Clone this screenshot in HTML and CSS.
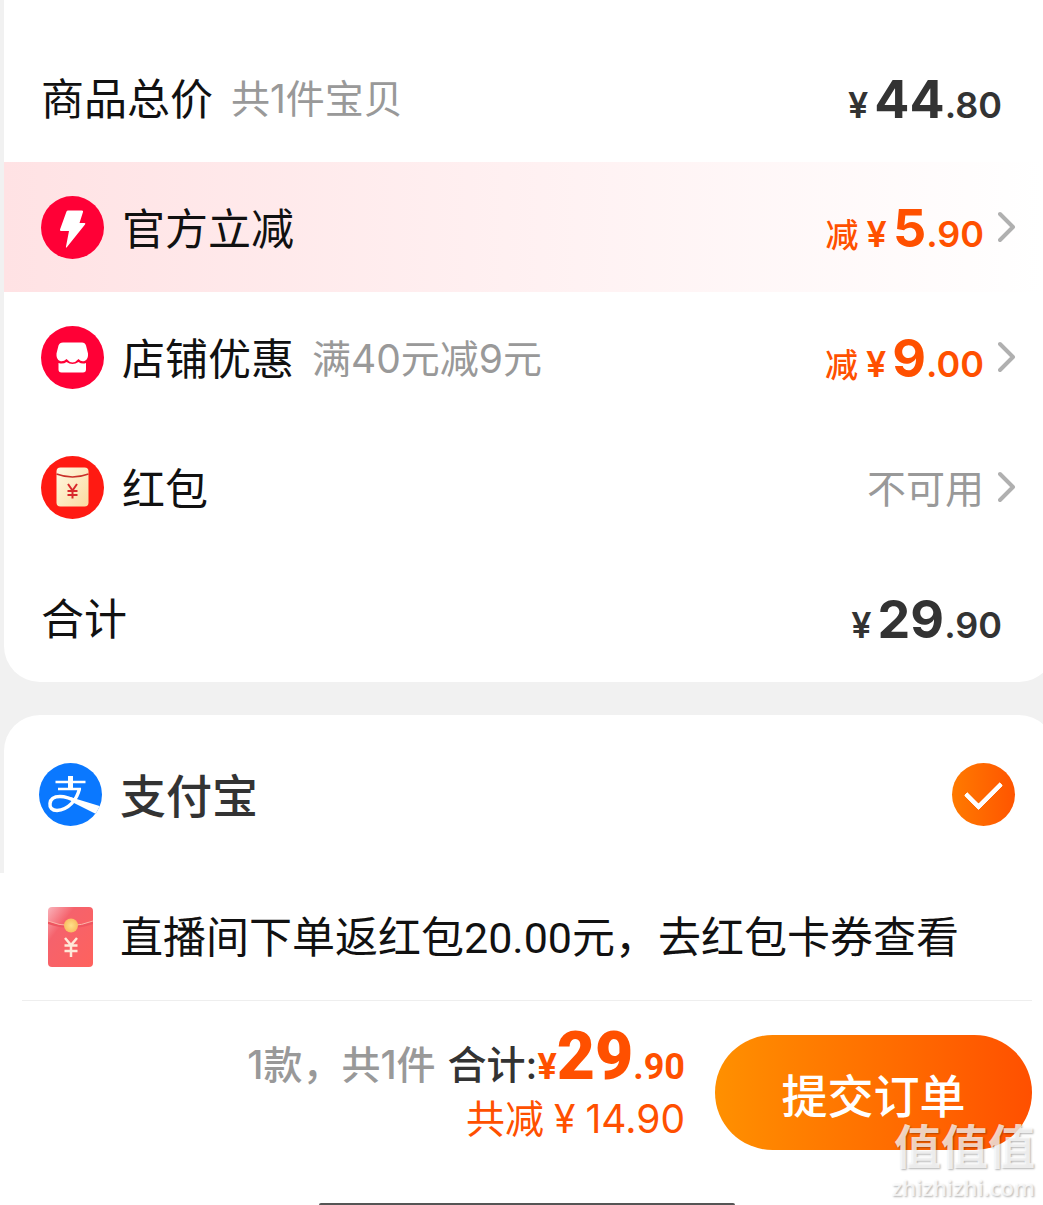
FILE: index.html
```html
<!DOCTYPE html>
<html lang="zh-CN">
<head>
    <meta charset="UTF-8">
    <meta name="viewport" content="width=device-width, initial-scale=1.0">
    <title>确认订单</title>
    <link rel="stylesheet" href="styles.css">
</head>
<body>
    <main>
        <section class="card price-card">
            <div class="row">
                <span class="label">商品总价</span>
                <span class="sub">共1件宝贝</span>
                <span class="price total"><span class="yen">¥</span><b>44</b>.80</span>
            </div>
            <button type="button" class="row official">
                <svg class="icon" viewBox="0 0 63 63">
                    <circle cx="31.5" cy="31.5" r="31.5" fill="#ff0036"/>
                    <path d="M27 14.500h14q1.500 0 1 1.500l-3.500 11h5q1.500 0 .5 1.500L26 51q-1.500 1.500-1-.5L28 35h-7.500q-2 0-1.500-1.500l6.500-18q.5-1 1.500-1z" fill="#fff"/>
                </svg>
                <span class="label">官方立减</span>
                <span class="price off"><span class="minus">减</span><span class="yen">¥</span><b>5</b>.90</span>
                <svg class="arrow" viewBox="0 0 18 32"><path d="M2 3l13 13L2 29"/></svg>
            </button>
            <button type="button" class="row">
                <svg class="icon" viewBox="0 0 63 63">
                    <circle cx="31.5" cy="31.5" r="31.5" fill="#ff0036"/>
                    <path d="M22 16.500h19q3 0 4 3l2 8q.5 6-3.500 7.500-3.500 1-6-2-3 3.500-6 3.500t-6-3.500q-3 3-6.500 2-4-1.500-3.500-7.500l2-8q1-3 4.500-3z" fill="#fff"/>
                    <path d="M17.500 37q4.500 1.500 8-1 6 4 12 0 3.500 2.500 7.500 1v6.500q0 3-3 3H20.500q-3 0-3-3z" fill="#fff"/>
                </svg>
                <span class="label">店铺优惠</span>
                <span class="sub">满40元减9元</span>
                <span class="price off"><span class="minus">减</span><span class="yen">¥</span><b>9</b>.00</span>
                <svg class="arrow" viewBox="0 0 18 32"><path d="M2 3l13 13L2 29"/></svg>
            </button>
            <button type="button" class="row">
                <svg class="icon" viewBox="0 0 63 63">
                    <defs>
                        <linearGradient id="cream" x1="0" y1="0" x2="1" y2="1">
                            <stop offset="0" stop-color="#fff8e2"/>
                            <stop offset="1" stop-color="#fbdba0"/>
                        </linearGradient>
                    </defs>
                    <circle cx="31.5" cy="31.5" r="31.5" fill="#ff1a12"/>
                    <rect x="15.5" y="11.5" width="32" height="39" rx="4" fill="url(#cream)"/>
                    <path d="M15.500 18q16 6 32 0" fill="none" stroke="#c9302a" stroke-width="1.5"/>
                    <path d="M27 28l4.500 6.500 4.500-6.500M31.500 34.500v8M26.500 35h10M26.500 39h10" fill="none" stroke="#d8292c" stroke-width="2"/>
                </svg>
                <span class="label">红包</span>
                <span class="sub disabled">不可用</span>
                <svg class="arrow" viewBox="0 0 18 32"><path d="M2 3l13 13L2 29"/></svg>
            </button>
            <div class="row">
                <span class="label">合计</span>
                <span class="price total"><span class="yen">¥</span><b>29</b>.90</span>
            </div>
        </section>

        <section class="card pay-card">
            <label class="pay" for="alipay">
                <svg class="icon" viewBox="0 0 63 63">
                    <defs><clipPath id="disc"><circle cx="31.5" cy="31.5" r="31.5"/></clipPath></defs>
                    <circle cx="31.5" cy="31.5" r="31.5" fill="#0a78ff"/>
                    <g clip-path="url(#disc)" fill="none" stroke="#fff">
                        <path d="M16.500 19h30M19 26h23" stroke-width="2.5"/>
                        <path d="M31.500 13v13" stroke-width="5"/>
                        <path d="M40.500 25.500C38 37 29 47 18 47.500c-5 0-7.500-3-7-7C11.500 36 15 33.500 21 33.500c7 0 13 3 18 5.500" stroke-width="3.5"/>
                        <path d="M31 34L64 44l-6 7.500L33 39z" fill="#fff" stroke="none"/>
                    </g>
                </svg>
                <span class="pay-name">支付宝</span>
                <input type="radio" id="alipay" name="pay" class="check" checked>
            </label>
        </section>
    </main>

    <footer>
        <div class="notice">
            <svg class="packet" viewBox="0 0 45 60">
                <defs>
                    <linearGradient id="red" x1="0" y1="0" x2="1" y2="1">
                        <stop offset="0" stop-color="#f9b3bb"/>
                        <stop offset=".3" stop-color="#f5626c"/>
                        <stop offset="1" stop-color="#ff625d"/>
                    </linearGradient>
                    <radialGradient id="gold">
                        <stop offset="0" stop-color="#ffe08a"/>
                        <stop offset="1" stop-color="#f9bd62"/>
                    </radialGradient>
                </defs>
                <rect width="45" height="60" rx="4" fill="url(#red)"/>
                <path d="M0 14q22 9 45 0v3q-22 8-45 0z" fill="#ef5560"/>
                <path d="M0 14q22 9 45 0" fill="none" stroke="#fbb3a8" stroke-width="1"/>
                <circle cx="23" cy="18.5" r="7" fill="url(#gold)"/>
                <path d="M17 31l6 7 6-7M23 38v12M16.500 38.500h13M16.500 44h13" fill="none" stroke="#ffe9d8" stroke-width="2.5"/>
            </svg>
            <span class="label notice-text">直播间下单返红包20.00元，去红包卡券查看</span>
        </div>
        <div class="submit-bar">
            <div class="summary">
                <p class="sum"><span class="count">1款，共1件</span><span class="sum-label">合计:</span><span class="sum-price">¥<b>29</b>.90</span></p>
                <p class="saved">共减<span class="saved-yen">¥</span>14.90</p>
            </div>
            <button type="submit" class="submit">提交订单</button>
        </div>
        <div class="home-bar"></div>
        <div class="watermark">
            <span class="wm-name">值值值</span>
            <span class="wm-site">zhizhizhi.com</span>
        </div>
    </footer>
</body>
</html>
```

FILE: styles.css
```css
* {
    box-sizing: border-box;
}
body {
    margin: 0;
    min-height: 100vh;
    display: flex;
    flex-direction: column;
    overflow-x: hidden;
    background-color: #f1f1f1;
    font-family: Inter, "Noto Sans CJK SC", sans-serif;
    color: #111;
}
main {
    padding-left: 4px;
}
button {
    border: none;
    background: none;
    font-family: inherit;
    color: inherit;
    text-align: left;
    cursor: pointer;
}

/* cards */
.card {
    margin-right: -12px;
    padding-right: 12px;
    background-color: #fff;
}
.price-card {
    padding-top: 32px;
    border-radius: 0 0 36px 36px;
}
.pay-card {
    margin-top: 33px;
    border-radius: 36px 36px 0 0;
}
.row {
    display: flex;
    align-items: center;
    width: 100%;
    height: 130px;
    padding: 0 27px 0 37px;
}
.official {
    background: linear-gradient(to right, #ffe2e4, #fff);
}
.icon {
    flex: none;
    width: 63px;
    height: 63px;
    margin-right: 18px;
}
.label {
    padding-top: 3px;
    font-size: 43px;
    line-height: 60px;
    white-space: nowrap;
}
.sub {
    margin-left: 18px;
    padding-top: 3px;
    font-size: 39px;
    line-height: 60px;
    color: #999;
}
.disabled {
    margin-left: auto;
}
.arrow {
    flex: none;
    width: 18px;
    height: 32px;
    margin-left: 14px;
    fill: none;
    stroke: #b0b0b0;
    stroke-width: 4;
    stroke-linecap: round;
    stroke-linejoin: round;
}

/* prices */
.price {
    margin-left: auto;
    padding-top: 10px;
    font-size: 36px;
    line-height: 60px;
    font-weight: 600;
    white-space: nowrap;
}
.price b {
    font-size: 52px;
    font-weight: 700;
}
.total {
    padding-right: 14px;
    color: #333;
}
.off {
    color: #ff5000;
}
.minus {
    margin-right: 8px;
    font-size: 33px;
    font-weight: 500;
}
.yen {
    margin-right: 6px;
}

/* payment */
.pay {
    display: flex;
    align-items: center;
    height: 158px;
    padding: 0 28px 0 35px;
}
.pay-name {
    padding-top: 3px;
    font-size: 46px;
    line-height: 60px;
    font-weight: 500;
    color: #333;
}
.check {
    appearance: none;
    display: grid;
    place-items: center;
    width: 63px;
    height: 63px;
    margin: 0 0 0 auto;
    border-radius: 50%;
    background: linear-gradient(to right, #ff7a00, #ff5500);
}
.check::after {
    content: "";
    width: 30px;
    height: 16px;
    margin-bottom: 8px;
    border-left: 5px solid #fff;
    border-bottom: 5px solid #fff;
    border-radius: 2px;
    transform: rotate(-45deg);
}

/* bottom bar */
footer {
    position: relative;
    flex: 1;
    display: flex;
    flex-direction: column;
    padding: 0 11px 0 22px;
    background-color: #fff;
}
.notice {
    display: flex;
    align-items: center;
    gap: 27px;
    height: 128px;
    padding-left: 26px;
    border-bottom: 1px solid #eee;
}
.notice-text {
    font-family: Roboto, "Noto Sans CJK SC", sans-serif;
}
.packet {
    flex: none;
    width: 45px;
    height: 60px;
}
.submit-bar {
    display: flex;
    justify-content: flex-end;
    align-items: flex-start;
    gap: 30px;
    padding-top: 26px;
}
.summary {
    text-align: right;
    white-space: nowrap;
}
.summary p {
    margin: 0;
}
.sum {
    font-size: 39px;
    line-height: 60px;
    font-weight: 500;
}
.count {
    margin-right: 12px;
    color: #999;
}
.sum-label {
    color: #333;
}
.sum-price {
    font-family: Roboto, sans-serif;
    font-size: 36px;
    font-weight: 700;
    color: #ff5000;
}
.sum-price b {
    font-size: 66px;
}
.saved {
    font-size: 39px;
    line-height: 44px;
    color: #ff5000;
}
.saved-yen {
    margin: 0 10px;
}
.submit {
    width: 317px;
    height: 115px;
    margin-top: 8px;
    border-radius: 58px;
    background: linear-gradient(to right, #ff9000, #ff5000);
    font-size: 46px;
    font-weight: 500;
    color: #fff;
    text-align: center;
}
.home-bar {
    width: 416px;
    height: 2px;
    margin: auto auto 0;
    border-radius: 2px 2px 0 0;
    background-color: #555;
}
.watermark {
    position: absolute;
    right: 8px;
    bottom: 2px;
    display: flex;
    flex-direction: column;
    align-items: flex-end;
    color: rgba(255, 255, 255, 0.75);
    text-shadow: 1px 1px 2px rgba(0, 0, 0, 0.3);
    font-weight: 700;
}
.wm-name {
    font-size: 47px;
    line-height: 48px;
}
.wm-site {
    font-family: "Open Sans", sans-serif;
    font-size: 22px;
    line-height: 32px;
    font-weight: 600;
}
```
